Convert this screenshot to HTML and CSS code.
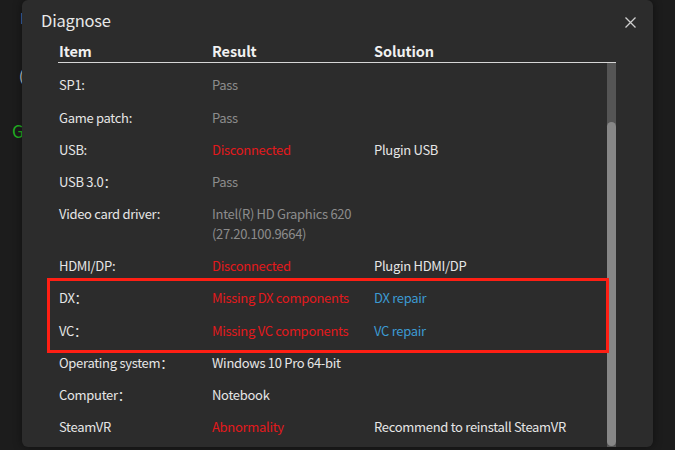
FILE: index.html
```html
<!DOCTYPE html>
<html>
<head>
<meta charset="utf-8">
<link rel="stylesheet" href="styles.css">
</head>
<body>
<div class="page">
  <div class="bg-line l1">D</div>
  <div class="bg-line l2">(</div>
  <div class="bg-line l3">G</div>
</div>
<div class="modal">
  <div class="title-bar">
    <span class="title">Diagnose</span>
    <svg class="close" width="11" height="11" viewBox="0 0 11 11"><path d="M0.5 0.5L10.5 10.5M10.5 0.5L0.5 10.5" stroke="#cfcfcf" stroke-width="1.3" fill="none"/></svg>
  </div>
  <div class="panel">
    <div class="head row">
      <div>Item</div><div>Result</div><div>Solution</div>
    </div>
    <div class="body">
      <div class="rows">
        <div class="row"><div>SP1:</div><div class="muted">Pass</div><div></div></div>
        <div class="row"><div>Game patch:</div><div class="muted">Pass</div><div></div></div>
        <div class="row"><div>USB:</div><div class="bad">Disconnected</div><div>Plugin USB</div></div>
        <div class="row"><div>USB 3.0：</div><div class="muted">Pass</div><div></div></div>
        <div class="row"><div>Video card driver:</div><div class="muted">Intel(R) HD Graphics 620 (27.20.100.9664)</div><div></div></div>
        <div class="row"><div>HDMI/DP:</div><div class="bad">Disconnected</div><div>Plugin HDMI/DP</div></div>
        <div class="row"><div>DX：</div><div class="bad">Missing DX components</div><div class="link">DX repair</div></div>
        <div class="row"><div>VC：</div><div class="bad">Missing VC components</div><div class="link">VC repair</div></div>
        <div class="row"><div>Operating system：</div><div>Windows 10 Pro 64-bit</div><div></div></div>
        <div class="row"><div>Computer：</div><div>Notebook</div><div></div></div>
        <div class="row"><div>SteamVR</div><div class="bad">Abnormality</div><div>Recommend to reinstall SteamVR</div></div>
      </div>
      <div class="scrollbar"><div class="thumb"></div></div>
    </div>
  </div>
  <div class="highlight"></div>
</div>
</body>
</html>
```
FILE: styles.css
```css
* { box-sizing: border-box; }
html, body {
  margin: 0;
  padding: 0;
  width: 675px;
  height: 450px;
  overflow: hidden;
  background: #1c1c1c;
  font-family: "Noto Sans CJK SC", "Noto Sans", sans-serif;
}
.page {
  padding-top: 8px;
  font-size: 14px;
  line-height: 20px;
}
.bg-line { white-space: nowrap; }
.l1 { padding-left: 20px; color: #6d8bb8; }
.l2 { padding-left: 19px; margin-top: 37px; color: #d8dde6; }
.l3 { padding-left: 12px; margin-top: 34px; color: #22b022; font-size: 17px; line-height: 24px; }

.modal {
  position: absolute;
  left: 22px;
  top: 0;
  width: 631px;
  height: 447px;
  background: #2c2c2c;
  border-radius: 6px;
  box-shadow: 0 0 10px rgba(0, 0, 0, 0.45);
  color: #e6e6e6;
  overflow: hidden;
}
.title-bar {
  height: 40px;
  padding: 0 17px 0 19px;
  display: flex;
  align-items: center;
  justify-content: space-between;
}
.title {
  font-size: 16.5px;
  letter-spacing: -0.2px;
  color: #e8e8e8;
}
.close { margin-top: 4px; }

.panel {
  margin-left: 36px;
  width: 558px;
  display: flex;
  flex-direction: column;
  height: 407px;
}
.row {
  display: grid;
  grid-template-columns: 153px 162px 1fr;
  padding: 6.375px 0 6.375px 1px;
  font-size: 13px;
  letter-spacing: -0.3px;
  line-height: 19.5px;
}
.row > div:nth-child(2) { padding-right: 8px; }
.head {
  height: 23px;
  padding: 0 0 0 1px;
  align-items: center;
  font-size: 14.5px;
  letter-spacing: -0.1px;
  font-weight: bold;
  line-height: 22px;
  border-bottom: 1px solid #d6d6d6;
  color: #f0f0f0;
}
.body {
  flex: 1;
  display: flex;
}
.rows {
  flex: 1;
  padding-top: 6px;
}
.muted { color: #8c8c8c; }
.bad { color: #e3191c; }
.link { color: #3c9ad2; }
.scrollbar {
  width: 9px;
  background: #555555;
  padding-top: 59px;
  padding-bottom: 1px;
  display: flex;
}
.thumb {
  flex: 1;
  background: #878787;
  border-radius: 5px;
}
.highlight {
  position: absolute;
  left: 25px;
  top: 278px;
  width: 562px;
  height: 75px;
  border: 3px solid #ff1f14;
}
```
